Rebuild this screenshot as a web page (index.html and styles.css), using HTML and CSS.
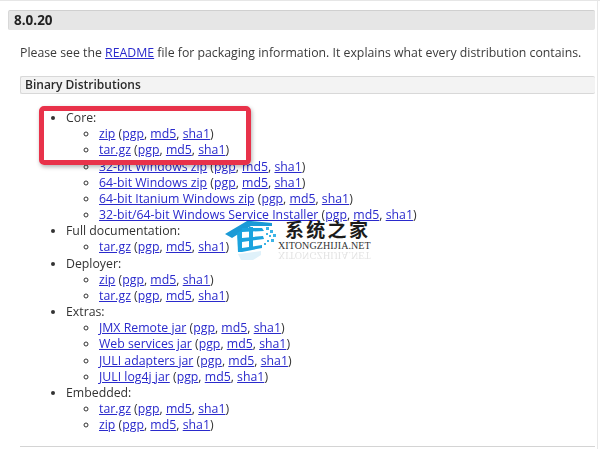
FILE: index.html
```html
<!DOCTYPE html>
<html lang="zh">
<head>
<meta charset="utf-8">
<title>8.0.20</title>
<link rel="stylesheet" href="styles.css">
</head>
<body>
<main class="page">
  <h3 class="version">8.0.20</h3>
  <p class="intro">Please see the <a href="#">README</a> file for packaging information. It explains what every distribution contains.</p>
  <h4 class="section">Binary Distributions</h4>
  <ul class="dist">
    <li>Core:
      <ul>
        <li><a href="#">zip</a> (<a href="#">pgp</a>, <a href="#">md5</a>, <a href="#">sha1</a>)</li>
        <li><a href="#">tar.gz</a> (<a href="#">pgp</a>, <a href="#">md5</a>, <a href="#">sha1</a>)</li>
        <li><a href="#">32-bit Windows zip</a> (<a href="#">pgp</a>, <a href="#">md5</a>, <a href="#">sha1</a>)</li>
        <li><a href="#">64-bit Windows zip</a> (<a href="#">pgp</a>, <a href="#">md5</a>, <a href="#">sha1</a>)</li>
        <li><a href="#">64-bit Itanium Windows zip</a> (<a href="#">pgp</a>, <a href="#">md5</a>, <a href="#">sha1</a>)</li>
        <li><a href="#">32-bit/64-bit Windows Service Installer</a> (<a href="#">pgp</a>, <a href="#">md5</a>, <a href="#">sha1</a>)</li>
      </ul>
    </li>
    <li>Full documentation:
      <ul>
        <li><a href="#">tar.gz</a> (<a href="#">pgp</a>, <a href="#">md5</a>, <a href="#">sha1</a>)</li>
      </ul>
    </li>
    <li>Deployer:
      <ul>
        <li><a href="#">zip</a> (<a href="#">pgp</a>, <a href="#">md5</a>, <a href="#">sha1</a>)</li>
        <li><a href="#">tar.gz</a> (<a href="#">pgp</a>, <a href="#">md5</a>, <a href="#">sha1</a>)</li>
      </ul>
    </li>
    <li>Extras:
      <ul>
        <li><a href="#">JMX Remote jar</a> (<a href="#">pgp</a>, <a href="#">md5</a>, <a href="#">sha1</a>)</li>
        <li><a href="#">Web services jar</a> (<a href="#">pgp</a>, <a href="#">md5</a>, <a href="#">sha1</a>)</li>
        <li><a href="#">JULI adapters jar</a> (<a href="#">pgp</a>, <a href="#">md5</a>, <a href="#">sha1</a>)</li>
        <li><a href="#">JULI log4j jar</a> (<a href="#">pgp</a>, <a href="#">md5</a>, <a href="#">sha1</a>)</li>
      </ul>
    </li>
    <li>Embedded:
      <ul>
        <li><a href="#">tar.gz</a> (<a href="#">pgp</a>, <a href="#">md5</a>, <a href="#">sha1</a>)</li>
        <li><a href="#">zip</a> (<a href="#">pgp</a>, <a href="#">md5</a>, <a href="#">sha1</a>)</li>
      </ul>
    </li>
  </ul>
  <hr class="rule">
</main>
<div class="highlight"></div>
<div class="watermark">
  <svg class="logo" viewBox="0 0 55 50" width="55" height="50" aria-hidden="true">
    <path d="M0 21 L22 8 L26 8 L47 10 L47 13 L26 13 L7 25 Z" fill="#1b9ad6"/>
    <path d="M12 20 L17 17 L17 39 L13 39 Z" fill="#1ba3de"/>
    <path d="M17 15 L37 15 L39 18 L17 19 Z M17 25 L38 23 L39 26 L17 29 Z M17 35 L37 32 L37 35 L17 39 Z" fill="#1ba3de"/>
    <path d="M24 14 L28 14 L28 36 L24 37 Z" fill="#1ba3de"/>
    <g fill="#3bb4e6">
      <rect x="41" y="14" width="3" height="3"/><rect x="45" y="17" width="3" height="3"/>
      <rect x="48" y="21" width="3" height="3"/><rect x="44" y="22" width="2" height="2"/>
      <rect x="41" y="20" width="2" height="2"/><rect x="46" y="26" width="3" height="3"/>
      <rect x="42" y="27" width="2" height="2"/><rect x="39" y="30" width="2" height="2"/>
    </g>
    <path d="M13 41 L36 38 L36 42 L28 47 L16 47 Z" fill="#dff1fa"/>
  </svg>
  <div class="brand">
    <span class="brand-cn">系统之家</span>
    <span class="brand-en">XITONGZHIJIA.NET</span>
    <span class="brand-echo">XITONGZHIJIA.NET</span>
  </div>
</div>
</body>
</html>
```
FILE: styles.css
```css
* { box-sizing: border-box; }
html, body { margin: 0; height: 449px; overflow: hidden; }
body {
  background: #fff;
  color: #333;
  font-family: "Open Sans", "Noto Sans", sans-serif;
  font-size: 12.3px;
  line-height: 16.15px;
  position: relative;
  border-top: 1px solid #e6e6e6;
}
.page {
  margin-right: 2px;
  padding: 9px 2px 0 8px;
  border-right: 1px solid #e8e8e8;
  height: 448px;
  overflow: hidden;
  filter: blur(.3px);
}
.version {
  margin: 0;
  height: 20px;
  padding: 0 0 0 5px;
  background: #e6e6e6;
  border-top: 1px solid #d0d0d0;
  border-left: 1px solid #d8d8d8;
  border-radius: 2px;
  font-size: 13.5px;
  line-height: 19px;
  font-weight: 700;
  color: #222;
}
.intro {
  margin: 15px 0 0 12px;
  color: #3a3a3a;
  white-space: nowrap;
}
.section {
  margin: 15px 0 0 12px;
  height: 18px;
  padding-left: 4px;
  background: #f3f3f3;
  border: 1px solid #d8d8d8;
  border-right: 0;
  border-radius: 2px;
  font-size: 12px;
  line-height: 16px;
  font-weight: 600;
  color: #2a2a2a;
}
a { color: #2a2acc; }
.dist {
  margin: 16px 0 0 12px;
  padding: 0 0 0 46px;
  list-style: disc;
}
.dist ul {
  margin: 0;
  padding: 0 0 0 33px;
  list-style: circle;
}
.dist li { margin: 0; }
.rule {
  margin: 13px 0 0 12px;
  height: 1px;
  border: 0;
  background: #d4d4d4;
}
.highlight {
  position: absolute;
  left: 39px;
  top: 105px;
  width: 212px;
  height: 59px;
  border: 5px solid #e8324a;
  border-radius: 5px;
  box-shadow: 1px 2px 4px rgba(0, 0, 0, .3);
}
.watermark {
  position: absolute;
  left: 225px;
  top: 212px;
  display: flex;
  align-items: flex-start;
}
.logo { display: block; }
.brand {
  padding-top: 5px;
  display: flex;
  flex-direction: column;
}
.brand-cn {
  margin-left: 5px;
  font-family: "Noto Sans CJK SC", sans-serif;
  font-size: 19px;
  font-weight: 700;
  line-height: 22px;
  letter-spacing: 2.3px;
  color: #1c1c1c;
  white-space: nowrap;
}
.brand-en {
  margin-left: -2px;
  font-family: "Liberation Serif", serif;
  font-size: 10px;
  line-height: 11px;
  letter-spacing: .1px;
  color: #333;
  white-space: nowrap;
}
.brand-echo {
  margin-left: -2px;
  font-family: "Liberation Serif", serif;
  font-size: 10px;
  line-height: 9px;
  letter-spacing: .1px;
  color: #ccc;
  opacity: .55;
  transform: scaleY(-1);
  white-space: nowrap;
}
```
